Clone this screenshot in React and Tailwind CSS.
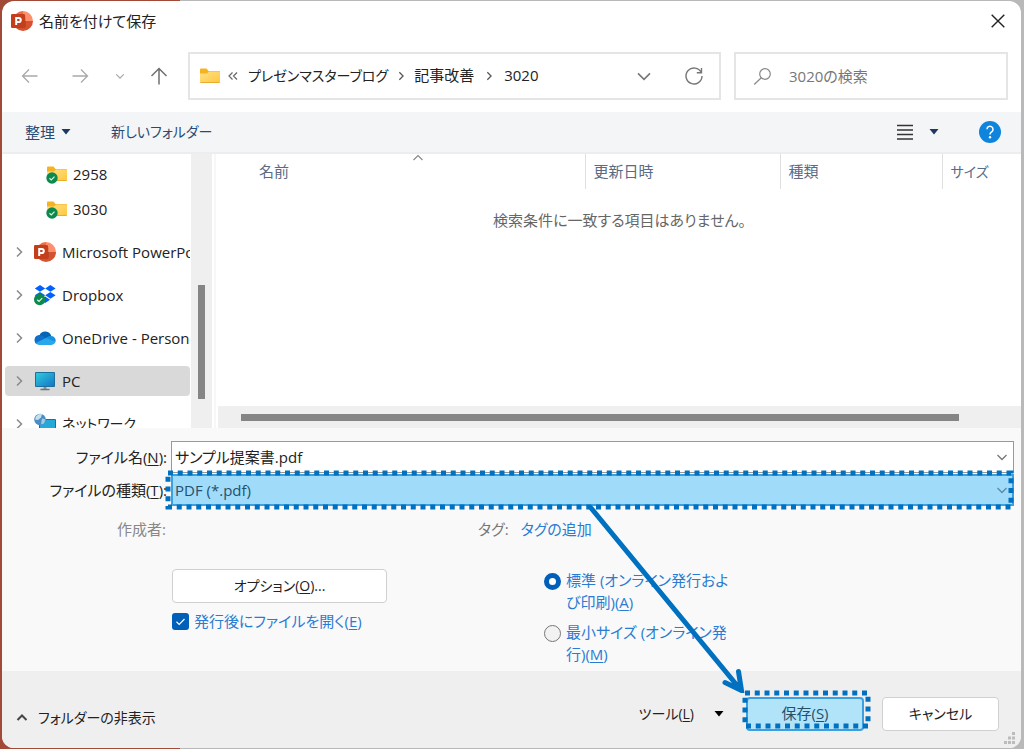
import React from "react";

const FONT = "font-['Open_Sans','Noto_Sans_CJK_JP',sans-serif]";

function PowerPointIcon() {
  return (
    <svg width="22" height="22" viewBox="0 0 22 22" className="shrink-0" aria-hidden="true">
      <path d="M12 1a10 10 0 0 0-10 10h10z" fill="#ed6c47" />
      <path d="M12 1a10 10 0 0 1 10 10l-5 2-5-2z" fill="#ff8f6b" />
      <path d="M2 11a10 10 0 0 0 20 0z" fill="#d35230" />
      <path d="M11 6h2.500a1 1 0 0 1 1 1v9.500a1 1 0 0 1-1 1H4.500L8 6z" fill="#000" opacity=".25" />
      <rect x="0" y="4" width="14" height="14" rx="1.200" fill="#c43e1c" />
      <path d="M5.200 15V7.900h2.500a2 2 0 0 1 0 4.200H5.200" fill="none" stroke="#fff" strokeWidth="2" />
    </svg>
  );
}

function Folder({ className = "" }) {
  return (
    <svg width="20" height="16" viewBox="0 0 20 16" className={className} aria-hidden="true">
      <defs>
        <linearGradient id="folderFill" x1="0" y1="0" x2="1" y2="1">
          <stop offset="0" stopColor="#ffe08a" />
          <stop offset="1" stopColor="#ffc83d" />
        </linearGradient>
      </defs>
      <path d="M0 1.500Q0 .5 1 .5h5.500L8.500 3H19q1 0 1 1v4H0z" fill="#f5b31f" />
      <path d="M0 5.500h7L9 3.500h10q1 0 1 1V14q0 1-1 1H1q-1 0-1-1z" fill="url(#folderFill)" />
      <path d="M.5 14.500h19" stroke="#e9ad2c" />
    </svg>
  );
}

function SyncBadge() {
  return (
    <svg width="12" height="12" viewBox="0 0 12 12" className="absolute bottom-0 -left-px" aria-hidden="true">
      <circle cx="6" cy="6" r="5.700" fill="#0c8a4d" />
      <path d="M3.500 6.200l1.800 1.700 3.200-3.300" fill="none" stroke="#d9f5e4" strokeWidth="1.200" />
    </svg>
  );
}

function SyncedFolder() {
  return (
    <span className="relative h-5 w-5 shrink-0 pt-0.5">
      <Folder />
      <SyncBadge />
    </span>
  );
}

function DropboxIcon() {
  return (
    <svg width="22" height="22" viewBox="0 0 22 22" className="shrink-0" aria-hidden="true">
      <path
        d="M6 1l5.200 3.400L6 7.800.8 4.400zM16.400 1l5.200 3.400-5.200 3.400-5.200-3.400zM6 7.900l5.200 3.400L6 14.700.8 11.300zM16.400 7.900l5.200 3.400-5.200 3.400-5.200-3.400zM11.200 12.600l4.800 3.200-4.800 3.200-4.800-3.200z"
        fill="#0061fe"
      />
      <circle cx="5.700" cy="15.500" r="5.700" fill="#0c8a4d" />
      <path d="M3.200 15.700L5 17.400l3.200-3.300" fill="none" stroke="#d9f5e4" strokeWidth="1.200" />
    </svg>
  );
}

function OneDriveIcon() {
  return (
    <svg width="22" height="16" viewBox="0 0 22 16" className="shrink-0" aria-hidden="true">
      <path d="M5.500 5.200A6.300 6.300 0 0 1 17.300 6L12 10 4 8z" fill="#0364b8" />
      <path d="M5 5a5 5 0 0 1 3.500.8L15 10 3 14.300A5 5 0 0 1 5 5z" fill="#0f6fc9" />
      <path d="M17.300 5.900A4.600 4.600 0 0 1 21.400 12L14 11l-2-3.300c1.800-1.300 3.400-1.900 5.300-1.800z" fill="#1490df" />
      <path d="M1.600 13.100L12 7.900l9.500 4.100a4.400 4.400 0 0 1-4 2.900H5a4.600 4.600 0 0 1-3.400-1.800z" fill="#28a8ea" />
    </svg>
  );
}

function PcIcon() {
  return (
    <svg width="22" height="20" viewBox="0 0 22 20" className="shrink-0" aria-hidden="true">
      <defs>
        <linearGradient id="screen" x1="0" y1="0" x2="1" y2="1">
          <stop offset="0" stopColor="#2fcbdc" />
          <stop offset="1" stopColor="#1575c8" />
        </linearGradient>
      </defs>
      <rect x="1" y="1" width="20" height="15" rx="1" fill="#1b6f9c" />
      <rect x="2" y="2" width="18" height="13" fill="url(#screen)" />
      <path d="M9.500 16h3v2h-3z" fill="#8b9399" />
      <path d="M6.500 18.500h9" stroke="#6b737a" strokeWidth="1.400" />
    </svg>
  );
}

function NetworkIcon() {
  return (
    <svg width="22" height="22" viewBox="0 0 22 22" className="shrink-0" aria-hidden="true">
      <rect x="5" y="6" width="17" height="13" rx="1" fill="#1b6f9c" />
      <rect x="6" y="7" width="15" height="11" fill="#25a9d8" />
      <circle cx="6" cy="6.500" r="5.800" fill="#4a8fc4" />
      <path d="M2 3.500c2-2.500 5-3 6-2.500L7 4.500 4 7 1 6.500z" fill="#c5dff0" />
      <path d="M8 5.500l3.500 1-1.500 4-3 1z" fill="#a6cbe4" />
    </svg>
  );
}

function Chevron({ dir = "right", size = 12, width = 1.5, className = "" }) {
  const paths = {
    right: "M4 1.500l4.500 4.500L4 10.500",
    down: "M1.500 4L6 8.500 10.500 4",
    up: "M1.500 8L6 3.500 10.500 8",
  };
  return (
    <svg width={size} height={size} viewBox="0 0 12 12" className={className} aria-hidden="true">
      <path d={paths[dir]} fill="none" stroke="currentColor" strokeWidth={width} />
    </svg>
  );
}

function Caret({ className = "" }) {
  return (
    <svg width="10" height="6" viewBox="0 0 10 6" className={className} aria-hidden="true">
      <path d="M.5 0h9L5 5.500z" fill="currentColor" />
    </svg>
  );
}

function DottedFrame({ className }) {
  return (
    <svg className={"pointer-events-none absolute overflow-visible " + className} aria-hidden="true">
      <rect width="100%" height="100%" fill="none" stroke="#0070c0" strokeWidth="5" strokeDasharray="5 4.750" />
    </svg>
  );
}

function Key({ children }) {
  return <span className="underline underline-offset-2">{children}</span>;
}

const places = [
  { name: "Microsoft PowerPoint", icon: <PowerPointIcon /> },
  { name: "Dropbox", icon: <DropboxIcon /> },
  { name: "OneDrive - Personal", icon: <OneDriveIcon /> },
  { name: "PC", icon: <PcIcon />, selected: true },
  { name: "ネットワーク", icon: <NetworkIcon />, small: true },
];

function TitleBar() {
  return (
    <header className="flex h-[51px] shrink-0 items-start justify-between pr-4 pl-[9px]">
      <div className="flex h-10 items-center gap-1.5">
        <PowerPointIcon />
        <h1>名前を付けて保存</h1>
      </div>
      <button type="button" aria-label="閉じる" className="flex h-10 items-center text-[#222]">
        <svg width="14" height="14" viewBox="0 0 14 14">
          <path d="M.7.7l12.600 12.600M13.300.7L.7 13.300" stroke="currentColor" strokeWidth="1.400" />
        </svg>
      </button>
    </header>
  );
}

function AddressRow() {
  return (
    <div className="flex h-12 shrink-0 items-stretch gap-[13px] pr-[13px]">
      <div className="flex w-[173px] shrink-0 items-center pl-[19px] text-[#a9a9a9]">
        <button type="button" aria-label="戻る">
          <svg width="18" height="16" viewBox="0 0 18 16">
            <path d="M16.500 8h-15M8 1.500L1.500 8 8 14.500" fill="none" stroke="currentColor" strokeWidth="1.300" />
          </svg>
        </button>
        <button type="button" aria-label="進む" className="ml-8">
          <svg width="18" height="16" viewBox="0 0 18 16">
            <path d="M1.500 8h15M10 1.500L16.500 8 10 14.500" fill="none" stroke="currentColor" strokeWidth="1.300" />
          </svg>
        </button>
        <button type="button" aria-label="履歴" className="ml-[26px]">
          <Chevron dir="down" size={10} />
        </button>
        <button type="button" aria-label="上へ" className="ml-[25px] text-[#6f6f6f]">
          <svg width="18" height="18" viewBox="0 0 18 18">
            <path d="M9 17.500V1.500M1.500 9L9 1.500 16.500 9" fill="none" stroke="currentColor" strokeWidth="1.500" />
          </svg>
        </button>
      </div>
      <nav aria-label="場所" className="flex min-w-0 flex-1 items-center border-2 border-[#e5e5e5] pl-2.5 text-sm">
        <Folder className="shrink-0" />
        <span className="ml-2 flex text-[#666]">
          <svg width="10" height="10" viewBox="0 0 10 10" aria-hidden="true">
            <path d="M4.500 1.500L1 5l3.500 3.500M9 1.500L5.500 5 9 8.500" fill="none" stroke="currentColor" strokeWidth="1.200" />
          </svg>
        </span>
        <a href="#blog" className="ml-2.5 whitespace-nowrap">プレゼンマスターブログ</a>
        <Chevron size={10} className="mx-2 shrink-0 text-[#555]" />
        <a href="#articles" className="text-[15px] whitespace-nowrap">記事改善</a>
        <Chevron size={10} className="mx-2.5 shrink-0 text-[#555]" />
        <a href="#3020" className="text-[15px]">3020</a>
        <button type="button" aria-label="以前の場所" className="ml-auto text-[#777]">
          <Chevron dir="down" size={16} width={1.2} />
        </button>
        <button type="button" aria-label="最新の情報に更新" className="mr-[15px] ml-8 text-[#777]">
          <svg width="20" height="20" viewBox="0 0 20 20">
            <path d="M17.200 6.500A8 8 0 1 0 18 10M17.500 2v4.800h-4.700" fill="none" stroke="currentColor" strokeWidth="1.400" />
          </svg>
        </button>
      </nav>
      <label className="flex w-[274px] shrink-0 items-center border-2 border-[#e5e5e5] pl-[17px]">
        <svg width="19" height="19" viewBox="0 0 19 19" className="shrink-0 text-[#888]" aria-hidden="true">
          <circle cx="12" cy="7" r="5.300" fill="none" stroke="currentColor" strokeWidth="1.200" />
          <path d="M8.300 10.700L1.200 17.500" stroke="currentColor" strokeWidth="1.200" />
        </svg>
        <input
          type="search"
          aria-label="検索"
          placeholder="3020の検索"
          className="ml-[17px] min-w-0 flex-1 outline-none placeholder:text-[#777]"
        />
      </label>
    </div>
  );
}

function Toolbar() {
  return (
    <div className="mt-3 flex h-[42px] shrink-0 items-center border-b-2 border-[#ebedee] bg-[#f4f5f7] pr-5 pl-[23px] text-[#2b4a72]">
      <button type="button" className="flex items-center gap-1.5">
        整理 <Caret className="text-[#1f3763]" />
      </button>
      <button type="button" className="ml-10 text-sm">新しいフォルダー</button>
      <button type="button" aria-label="表示方法" className="ml-auto text-[#333]">
        <svg width="16" height="16" viewBox="0 0 16 16">
          <path d="M0 1.500h16M0 6h16M0 10.500h16M0 15h16" stroke="currentColor" strokeWidth="1.500" />
        </svg>
      </button>
      <button type="button" aria-label="その他の表示" className="ml-4 text-[#1f3763]">
        <Caret />
      </button>
      <button type="button" aria-label="ヘルプ" className="ml-10">
        <svg width="22" height="22" viewBox="0 0 22 22">
          <circle cx="11" cy="11" r="11" fill="#0f84dc" />
          <path d="M8 8.300a3 3 0 1 1 4.600 2.500c-1.100.7-1.600 1.200-1.600 2.700" fill="none" stroke="#fff" strokeWidth="1.500" />
          <circle cx="11" cy="16.300" r="1.200" fill="#fff" />
        </svg>
      </button>
    </div>
  );
}

function Sidebar() {
  return (
    <div className="flex w-[214px] shrink-0 border-r-2 border-[#f7f7f7]">
      <nav aria-label="フォルダー" className="min-w-0 flex-1 overflow-hidden pt-[5px] pl-[3px] text-base">
        <ul className="flex flex-col gap-[5px]">
          {["2958", "3030"].map((name) => (
            <li key={name}>
              <a href={"#" + name} className="flex h-[30px] items-center gap-1.5 pl-[42px] text-[15px]">
                <SyncedFolder />
                {name}
              </a>
            </li>
          ))}
        </ul>
        <ul className="mt-[13px] flex flex-col gap-[13px]">
          {places.map((p) => (
            <li key={p.name}>
              <a
                href={"#" + p.name}
                className={
                  "mr-px flex h-[30px] items-center overflow-hidden rounded-sm pl-2 whitespace-nowrap " +
                  (p.selected ? "bg-[#d9d9d9]" : "")
                }
              >
                <Chevron className="mr-[9px] shrink-0 text-[#8a8a8a]" />
                {p.icon}
                <span className={"ml-1.5 " + (p.small ? "text-sm" : "text-[15px]")}>{p.name}</span>
              </a>
            </li>
          ))}
        </ul>
      </nav>
      <div className="mr-0.5 flex w-[21px] shrink-0 flex-col items-center bg-[#efefef]">
        <div className="grow-[131]" />
        <div className="w-[7px] grow-[115] bg-[#858585]" />
        <div className="grow-[29]" />
      </div>
    </div>
  );
}

function FileList() {
  return (
    <div className="ml-0.5 flex min-w-0 flex-1 flex-col">
      <table className="w-full table-fixed text-left text-[#5b6b85]">
        <colgroup>
          <col />
          <col className="w-[195px]" />
          <col className="w-[162px]" />
          <col className="w-[79px]" />
        </colgroup>
        <thead>
          <tr className="h-[35px]">
            <th className="relative border-r border-[#dfdfdf] pl-[41px] font-normal">
              <Chevron dir="up" className="absolute -top-0.5 left-[194px] text-[#8a8a8a]" width={1.2} />
              名前
            </th>
            <th className="border-r border-[#dfdfdf] pl-2 font-normal">更新日時</th>
            <th className="border-r border-[#dfdfdf] pl-2 font-normal">種類</th>
            <th className="pl-2 text-sm font-normal">サイズ</th>
          </tr>
        </thead>
        <tbody>
          <tr>
            <td colSpan={4} className="pt-5 text-center text-[#666]">
              検索条件に一致する項目はありません。
            </td>
          </tr>
        </tbody>
      </table>
      <div className="mt-auto flex h-[22px] items-center bg-[#efefef]">
        <div className="grow-[23]" />
        <div className="h-[7px] grow-[718] bg-[#858585]" />
        <div className="grow-[62]" />
      </div>
    </div>
  );
}

function SaveForm() {
  return (
    <div className="shrink-0 bg-[#f9f9f9] pt-[13px] pr-[7px] pb-1.5">
      <div className="flex h-8 items-stretch">
        <label htmlFor="filename" className="w-[169px] shrink-0 self-center pr-1 text-right">
          ファイル名(<Key>N</Key>):
        </label>
        <div className="flex min-w-0 flex-1 items-center border border-[#999] bg-white pr-[5px]">
          <input id="filename" defaultValue="サンプル提案書.pdf" className="min-w-0 flex-1 pl-[3px] outline-none" />
          <button type="button" aria-label="ファイル名の履歴" className="text-[#777]">
            <Chevron dir="down" width={1.3} />
          </button>
        </div>
      </div>
      <div className="mt-px flex h-8 items-stretch">
        <label htmlFor="filetype" className="w-[169px] shrink-0 self-center pr-1 text-right">
          ファイルの種類(<Key>T</Key>):
        </label>
        <div className="relative flex min-w-0 flex-1">
          <select
            id="filetype"
            className="min-w-0 flex-1 appearance-none border-2 border-[#3c9fe0] bg-[#a0dcf9] pl-0.5 text-[#24506e] outline-none"
          >
            <option>PDF (*.pdf)</option>
          </select>
          <Chevron dir="down" width={1.3} className="pointer-events-none absolute top-2.5 right-1.5 text-[#5b87a8]" />
          <DottedFrame className="-top-px -left-[3px] h-[34px] w-full" />
        </div>
      </div>
      <div className="mt-[9px] flex h-7 items-center">
        <span className="w-[168px] shrink-0 pr-1 text-right text-[#888]">作成者:</span>
        <span className="ml-[308px] text-[#777]">タグ:</span>
        <a href="#tags" className="ml-3 text-[#2a7cd3]">タグの追加</a>
      </div>
      <div className="mt-[26px] flex">
        <div className="ml-[170px] w-[215px] shrink-0">
          <button type="button" className="h-[34px] w-full rounded-sm border border-[#d0d0d0] bg-white text-sm">
            オプション(<Key>O</Key>)...
          </button>
          <label className="mt-[7px] flex items-center gap-[5px] whitespace-nowrap text-[#2a7cd3]">
            <span className="relative flex">
              <input type="checkbox" defaultChecked className="h-[17px] w-[17px] appearance-none rounded-[3px] bg-[#005fb8]" />
              <svg width="17" height="17" viewBox="0 0 17 17" className="pointer-events-none absolute inset-0" aria-hidden="true">
                <path d="M4.500 8.800l2.700 2.600 5.300-5.400" fill="none" stroke="#fff" strokeWidth="1.200" />
              </svg>
            </span>
            <span>発行後にファイルを開く(<Key>E</Key>)</span>
          </label>
        </div>
        <fieldset className="ml-[157px] flex flex-col gap-2 leading-[22px] text-[#2a7cd3]">
          <label className="flex items-start gap-[5px]">
            <input
              type="radio"
              name="quality"
              defaultChecked
              className="mt-1 h-[17px] w-[17px] appearance-none rounded-full border-[5px] border-[#005fb8] bg-white"
            />
            <span>標準 (オンライン発行およ<br />び印刷)(<Key>A</Key>)</span>
          </label>
          <label className="flex items-start gap-[5px]">
            <input
              type="radio"
              name="quality"
              className="mt-1 h-[17px] w-[17px] appearance-none rounded-full border border-[#777] bg-[#f2f2f2]"
            />
            <span>最小サイズ (オンライン発<br />行)(<Key>M</Key>)</span>
          </label>
        </fieldset>
      </div>
    </div>
  );
}

function Footer() {
  return (
    <footer className="relative flex h-[77px] shrink-0 items-center bg-[#efefef] pt-2 pr-[22px] pl-3.5">
      <button type="button" className="mt-2 flex items-center gap-2.5 text-sm">
        <Chevron dir="up" width={2} className="text-[#444]" />
        フォルダーの非表示
      </button>
      <button type="button" className="ml-auto flex items-center text-sm">
        ツール(<Key>L</Key>)
        <Caret className="ml-5 text-black" />
      </button>
      <div className="relative ml-[22px]">
        <button
          type="button"
          className="h-[34px] w-[118px] rounded-sm border-2 border-[#3c9fe0] bg-[#b1e4f8] text-[#24506e]"
        >
          保存(<Key>S</Key>)
        </button>
        <DottedFrame className="-top-1 -left-px h-[33px] w-[123px]" />
        <svg
          width="160"
          height="190"
          viewBox="0 0 160 190"
          className="pointer-events-none absolute right-[118px] bottom-[38px]"
          aria-hidden="true"
        >
          <path d="M5 5L154 186M139 179.500L155.500 187.500L152.500 168.500" fill="none" stroke="#0070c0" strokeWidth="5" strokeLinecap="round" />
        </svg>
      </div>
      <button type="button" className="ml-[18px] h-[34px] w-[117px] rounded-sm border border-[#d0d0d0] bg-white text-sm">
        キャンセル
      </button>
      <svg width="14" height="14" viewBox="0 0 14 14" className="absolute right-1 bottom-0.5" aria-hidden="true">
        <path d="M9 0h3v3H9zM5 4.500h3v3H5zM9 4.500h3v3H9zM1 9h3v3H1zM5 9h3v3H5zM9 9h3v3H9z" fill="#bcbcbc" />
      </svg>
    </footer>
  );
}

export default function App() {
  return (
    <div className="flex h-screen min-h-[700px] bg-[linear-gradient(to_right,#a14a38_180px,#b9b9b9_180px)] pt-px pr-[3px] pb-px pl-0.5">
      <main
        className={
          "flex min-w-0 flex-1 flex-col overflow-hidden rounded-xl bg-white text-[15px] text-[#222] [font-feature-settings:'palt'] " +
          FONT
        }
      >
        <TitleBar />
        <AddressRow />
        <Toolbar />
        <div className="flex min-h-0 flex-1">
          <Sidebar />
          <FileList />
        </div>
        <SaveForm />
        <Footer />
      </main>
    </div>
  );
}
